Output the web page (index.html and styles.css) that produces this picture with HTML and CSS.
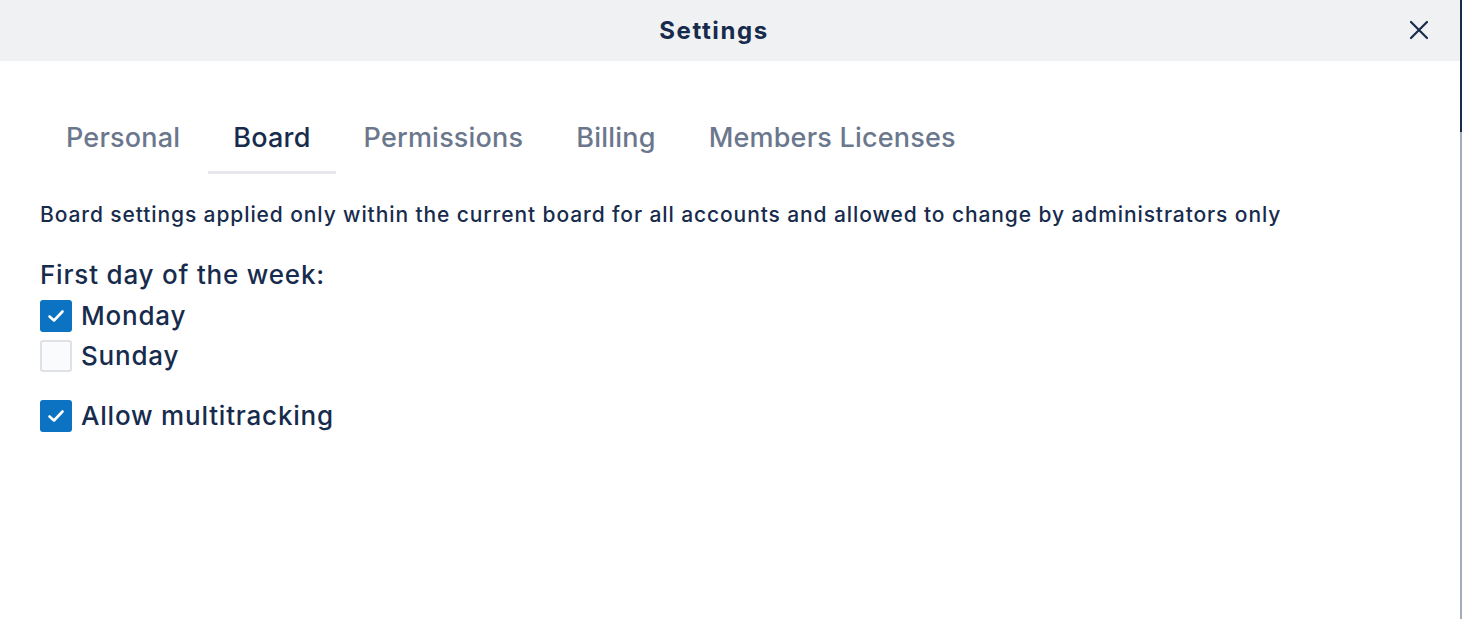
FILE: index.html
```html
<!DOCTYPE html>
<html lang="en">
<head>
<meta charset="utf-8">
<title>Settings</title>
<link rel="stylesheet" href="styles.css">
</head>
<body>
<div class="page">
  <div class="modal">
    <header class="modal-header">
      <h1 class="modal-title">Settings</h1>
      <button class="close-btn" aria-label="Close">
        <svg width="22" height="22" viewBox="0 0 22 22"><path d="M3 3 L19 19 M19 3 L3 19" stroke="#172b4d" stroke-width="2.2" stroke-linecap="round"/></svg>
      </button>
    </header>
    <div class="modal-body">
      <nav class="tabs">
        <div class="tab">Personal</div>
        <div class="tab active">Board</div>
        <div class="tab">Permissions</div>
        <div class="tab">Billing</div>
        <div class="tab">Members Licenses</div>
      </nav>
      <p class="desc">Board settings applied only within the current board for all accounts and allowed to change by administrators only</p>
      <div class="field-label">First day of the week:</div>
      <div class="option-group">
        <label class="option"><span class="box checked"><svg width="20" height="20" viewBox="0 0 20 20"><path d="M3.5 10.5 L8 14.5 L16.5 5.5" fill="none" stroke="#fff" stroke-width="2.6" stroke-linecap="round" stroke-linejoin="round"/></svg></span>Monday</label>
        <label class="option"><span class="box"></span>Sunday</label>
      </div>
      <label class="option multi"><span class="box checked"><svg width="20" height="20" viewBox="0 0 20 20"><path d="M3.5 10.5 L8 14.5 L16.5 5.5" fill="none" stroke="#fff" stroke-width="2.6" stroke-linecap="round" stroke-linejoin="round"/></svg></span>Allow multitracking</label>
    </div>
  </div>
  <div class="backdrop-edge"></div>
</div>
</body>
</html>
```
FILE: styles.css
```css
html, body {
  margin: 0;
  padding: 0;
  height: 100%;
}
body {
  font-family: Inter, "Noto Sans", "Liberation Sans", sans-serif;
  color: #172b4d;
  background: #ffffff;
}
.page {
  display: flex;
  height: 619px;
  overflow: hidden;
}
.modal {
  width: 1460px;
  flex: none;
  background: #ffffff;
  display: flex;
  flex-direction: column;
}
.backdrop-edge {
  flex: 1;
  background: linear-gradient(#172b4d 0, #172b4d 132px, #a5adba 132px, #a5adba 100%);
}
.modal-header {
  height: 61px;
  background: #f0f1f3;
  display: flex;
  align-items: center;
  justify-content: center;
  padding-right: 32px;
  position: relative;
}
.modal-title {
  margin: 0;
  font-size: 24px;
  font-weight: 700;
  color: #172b4d;
  letter-spacing: 1.6px;
}
.close-btn {
  position: absolute;
  right: 29px;
  top: 18px;
  width: 24px;
  height: 24px;
  padding: 0;
  border: 0;
  background: transparent;
  display: flex;
  align-items: center;
  justify-content: center;
}
.modal-body {
  padding: 45px 40px 0 40px;
}
.tabs {
  display: flex;
  gap: 3px;
  margin-left: 1px;
}
.tab {
  padding: 16px 25px 17px;
  font-size: 27px;
  line-height: 32px;
  letter-spacing: 0.2px;
  color: #6b778c;
  font-weight: 500;
  border-bottom: 3px solid transparent;
}
.tab.active {
  color: #172b4d;
  border-bottom-color: #e6e8ec;
}
.desc {
  margin: 28px 0 0 0;
  font-size: 21px;
  line-height: 26px;
  letter-spacing: 0.9px;
  font-weight: 500;
  color: #172b4d;
}
.field-label {
  margin-top: 31px;
  font-size: 26px;
  line-height: 32px;
  letter-spacing: 0.8px;
  font-weight: 500;
}
.option-group {
  display: flex;
  flex-direction: column;
  gap: 8px;
  margin-top: 9px;
}
.option {
  display: flex;
  align-items: center;
  gap: 9px;
  font-size: 26px;
  line-height: 32px;
  letter-spacing: 0.8px;
  font-weight: 500;
}
.multi {
  margin-top: 28px;
}
.box {
  width: 32px;
  height: 32px;
  box-sizing: border-box;
  border-radius: 3px;
  border: 2px solid #dfe1e6;
  background: #fafbfc;
  display: flex;
  align-items: center;
  justify-content: center;
  flex: none;
}
.box.checked {
  border: 0;
  background: #0c73c2;
}
```
